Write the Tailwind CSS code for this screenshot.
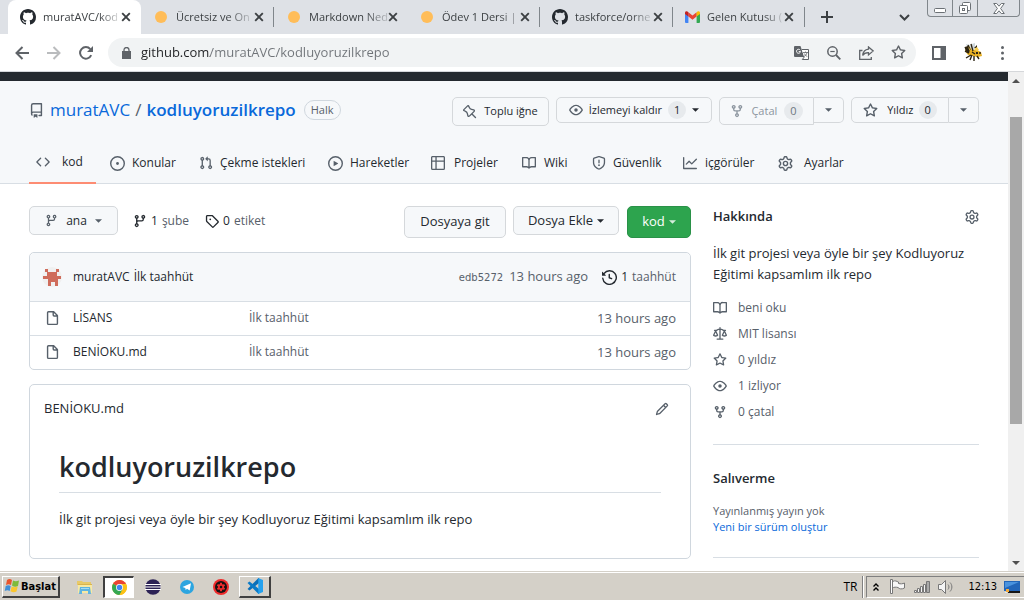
<!DOCTYPE html>
<html lang="tr">
<head>
<meta charset="utf-8">
<meta name="viewport" content="width=device-width, initial-scale=1">
<title>muratAVC/kodluyoruzilkrepo</title>
<script src="https://cdn.jsdelivr.net/npm/@tailwindcss/browser@4"></script>
</head>
<body class="flex h-screen flex-col overflow-hidden bg-white font-['Open_Sans','Noto_Sans',sans-serif] text-[13px] text-[#24292f]">

<svg class="hidden" aria-hidden="true">
  <symbol id="github" viewBox="0 0 16 16"><path d="M8 0C3.58 0 0 3.58 0 8c0 3.54 2.29 6.53 5.47 7.59.4.07.55-.17.55-.38 0-.19-.01-.82-.01-1.49-2.01.37-2.53-.49-2.69-.94-.09-.23-.48-.94-.82-1.13-.28-.15-.68-.52-.01-.53.63-.01 1.08.58 1.23.82.72 1.21 1.87.87 2.33.66.07-.52.28-.87.51-1.07-1.78-.2-3.64-.89-3.64-3.95 0-.87.31-1.59.82-2.15-.08-.2-.36-1.02.08-2.12 0 0 .67-.21 2.2.82.64-.18 1.32-.27 2-.27.68 0 1.36.09 2 .27 1.53-1.04 2.2-.82 2.2-.82.44 1.1.16 1.92.08 2.12.51.56.82 1.27.82 2.15 0 3.07-1.87 3.75-3.65 3.95.29.25.54.73.54 1.48 0 1.07-.01 1.93-.01 2.2 0 .21.15.46.55.38A8.013 8.013 0 0016 8c0-4.42-3.58-8-8-8z"/></symbol>
  <symbol id="close" viewBox="0 0 10 10"><path d="M1.2 1.2l7.6 7.6M8.8 1.2L1.2 8.8" stroke="currentColor" stroke-width="1.9" fill="none"/></symbol>
  <symbol id="repo" viewBox="0 0 16 16"><path fill-rule="evenodd" d="M2 2.5A2.5 2.5 0 014.5 0h8.75a.75.75 0 01.75.75v12.5a.75.75 0 01-.75.75h-2.5a.75.75 0 110-1.5h1.75v-2h-8a1 1 0 00-.714 1.7.75.75 0 01-1.072 1.05A2.495 2.495 0 012 11.5v-9zm10.5-1V9h-8c-.356 0-.694.074-1 .208V2.5a1 1 0 011-1h8zM5 12.25v3.25a.25.25 0 00.4.2l1.45-1.087a.25.25 0 01.3 0L8.6 15.7a.25.25 0 00.4-.2v-3.25a.25.25 0 00-.25-.25h-3.5a.25.25 0 00-.25.25z"/></symbol>
  <symbol id="pin" viewBox="0 0 16 16"><path fill-rule="evenodd" d="M4.456.734a1.75 1.75 0 012.826.504l.613 1.327a3.081 3.081 0 002.084 1.707l2.454.584c1.332.317 1.8 1.972.832 2.94L11.06 10l3.72 3.72a.75.75 0 11-1.061 1.06L10 11.06l-2.204 2.205c-.968.968-2.623.5-2.94-.832l-.584-2.454a3.081 3.081 0 00-1.707-2.084l-1.327-.613a1.75 1.75 0 01-.504-2.826L4.456.734zM5.92 1.866a.25.25 0 00-.404-.072L1.794 5.516a.25.25 0 00.072.404l1.328.613A4.582 4.582 0 015.73 9.63l.584 2.454a.25.25 0 00.42.12l5.47-5.47a.25.25 0 00-.12-.42L9.63 5.73a4.581 4.581 0 01-3.098-2.537L5.92 1.866z"/></symbol>
  <symbol id="eye" viewBox="0 0 16 16"><path fill-rule="evenodd" d="M1.679 7.932c.412-.621 1.242-1.75 2.366-2.717C5.175 4.242 6.527 3.5 8 3.5c1.473 0 2.824.742 3.955 1.715 1.124.967 1.954 2.096 2.366 2.717a.119.119 0 010 .136c-.412.621-1.242 1.75-2.366 2.717C10.825 11.758 9.473 12.5 8 12.5c-1.473 0-2.824-.742-3.955-1.715C2.92 9.818 2.09 8.69 1.679 8.068a.119.119 0 010-.136zM8 2c-1.981 0-3.67.992-4.933 2.078C1.797 5.169.88 6.423.43 7.1a1.619 1.619 0 000 1.798c.45.678 1.367 1.932 2.637 3.024C4.329 13.008 6.019 14 8 14c1.981 0 3.67-.992 4.933-2.078 1.27-1.091 2.187-2.345 2.637-3.023a1.619 1.619 0 000-1.798c-.45-.678-1.367-1.932-2.637-3.023C11.671 2.992 9.981 2 8 2zm0 8a2 2 0 100-4 2 2 0 000 4z"/></symbol>
  <symbol id="fork" viewBox="0 0 16 16"><path fill-rule="evenodd" d="M5 3.25a.75.75 0 11-1.5 0 .75.75 0 011.5 0zm0 2.122a2.25 2.25 0 10-1.5 0v.878A2.25 2.25 0 005.75 8.5h1.5v2.128a2.251 2.251 0 101.5 0V8.5h1.5a2.25 2.25 0 002.25-2.25v-.878a2.25 2.25 0 10-1.5 0v.878a.75.75 0 01-.75.75h-4.5A.75.75 0 015 6.25v-.878zm3.75 7.378a.75.75 0 11-1.5 0 .75.75 0 011.5 0zm3-8.75a.75.75 0 100-1.5.75.75 0 000 1.5z"/></symbol>
  <symbol id="star" viewBox="0 0 16 16"><path fill-rule="evenodd" d="M8 .25a.75.75 0 01.673.418l1.882 3.815 4.21.612a.75.75 0 01.416 1.279l-3.046 2.97.719 4.192a.75.75 0 01-1.088.791L8 12.347l-3.766 1.98a.75.75 0 01-1.088-.79l.72-4.194L.818 6.374a.75.75 0 01.416-1.28l4.21-.611L7.327.668A.75.75 0 018 .25zm0 2.445L6.615 5.5a.75.75 0 01-.564.41l-3.097.45 2.24 2.184a.75.75 0 01.216.664l-.528 3.084 2.769-1.456a.75.75 0 01.698 0l2.77 1.456-.53-3.084a.75.75 0 01.216-.664l2.24-2.183-3.096-.45a.75.75 0 01-.564-.41L8 2.694v.001z"/></symbol>
  <symbol id="code" viewBox="0 0 16 16"><path fill-rule="evenodd" d="M4.72 3.22a.75.75 0 011.06 1.06L2.06 8l3.72 3.72a.75.75 0 11-1.06 1.06L.47 8.53a.75.75 0 010-1.06l4.25-4.25zm6.56 0a.75.75 0 10-1.06 1.06L13.94 8l-3.72 3.72a.75.75 0 101.06 1.06l4.25-4.25a.75.75 0 000-1.06l-4.25-4.25z"/></symbol>
  <symbol id="issue" viewBox="0 0 16 16"><path d="M8 9.5a1.5 1.5 0 100-3 1.5 1.5 0 000 3z"/><path fill-rule="evenodd" d="M8 0a8 8 0 100 16A8 8 0 008 0zM1.5 8a6.5 6.5 0 1113 0 6.5 6.5 0 01-13 0z"/></symbol>
  <symbol id="pull" viewBox="0 0 16 16"><path fill-rule="evenodd" d="M7.177 3.073L9.573.677A.25.25 0 0110 .854v4.792a.25.25 0 01-.427.177L7.177 3.427a.25.25 0 010-.354zM3.75 2.5a.75.75 0 100 1.5.75.75 0 000-1.5zm-2.25.75a2.25 2.25 0 113 2.122v5.256a2.251 2.251 0 11-1.5 0V5.372A2.25 2.25 0 011.5 3.25zM11 2.5h-1V4h1a1 1 0 011 1v5.628a2.251 2.251 0 101.5 0V5A2.5 2.5 0 0011 2.5zm1 10.25a.75.75 0 111.5 0 .75.75 0 01-1.5 0zM3.75 12a.75.75 0 100 1.5.75.75 0 000-1.5z"/></symbol>
  <symbol id="play" viewBox="0 0 16 16"><path fill-rule="evenodd" d="M1.5 8a6.5 6.5 0 1113 0 6.5 6.5 0 01-13 0zM8 0a8 8 0 100 16A8 8 0 008 0zM6.379 5.227A.25.25 0 006 5.442v5.117a.25.25 0 00.379.214l4.264-2.559a.25.25 0 000-.428L6.379 5.227z"/></symbol>
  <symbol id="table" viewBox="0 0 16 16"><path fill-rule="evenodd" d="M0 1.75C0 .784.784 0 1.75 0h12.5C15.216 0 16 .784 16 1.75v12.5A1.75 1.75 0 0114.25 16H1.75A1.75 1.75 0 010 14.25V1.75zM1.5 6.5v7.75c0 .138.112.25.25.25H5v-8H1.5zM5 5H1.5V1.75a.25.25 0 01.25-.25H5V5zm1.5 1.5v8h7.75a.25.25 0 00.25-.25V6.5h-8zm8-1.5h-8V1.5h7.75a.25.25 0 01.25.25V5z"/></symbol>
  <symbol id="book" viewBox="0 0 16 16"><path fill-rule="evenodd" d="M0 1.75A.75.75 0 01.75 1h4.253c1.227 0 2.317.59 3 1.501A3.744 3.744 0 0111.006 1h4.245a.75.75 0 01.75.75v10.5a.75.75 0 01-.75.75h-4.507a2.25 2.25 0 00-1.591.659l-.622.621a.75.75 0 01-1.06 0l-.622-.621A2.25 2.25 0 005.258 13H.75a.75.75 0 01-.75-.75V1.75zm8.755 3a2.25 2.25 0 012.25-2.25H14.5v9h-3.757c-.71 0-1.4.201-1.992.572l.004-7.322zm-1.504 7.324l.004-5.073-.002-2.253A2.25 2.25 0 005.003 2.5H1.5v9h3.757a3.75 3.75 0 011.994.574z"/></symbol>
  <symbol id="shield" viewBox="0 0 16 16"><path fill-rule="evenodd" d="M7.467.133a1.75 1.75 0 011.066 0l5.25 1.68A1.75 1.75 0 0115 3.48V7c0 1.566-.32 3.182-1.303 4.682-.983 1.498-2.585 2.813-5.032 3.855a1.7 1.7 0 01-1.33 0c-2.447-1.042-4.049-2.357-5.032-3.855C1.32 10.182 1 8.566 1 7V3.48a1.75 1.75 0 011.217-1.667l5.25-1.68zm.61 1.429a.25.25 0 00-.153 0l-5.25 1.68a.25.25 0 00-.174.238V7c0 1.358.275 2.666 1.057 3.86.784 1.194 2.121 2.34 4.366 3.297a.2.2 0 00.154 0c2.245-.956 3.582-2.104 4.366-3.298C13.225 9.666 13.5 8.36 13.5 7V3.48a.25.25 0 00-.174-.237l-5.25-1.68zM9 10.5a1 1 0 11-2 0 1 1 0 012 0zm-.25-5.75a.75.75 0 10-1.5 0v3a.75.75 0 001.5 0v-3z"/></symbol>
  <symbol id="graph" viewBox="0 0 16 16"><path fill-rule="evenodd" d="M1.5 1.75a.75.75 0 00-1.5 0v12.5c0 .414.336.75.75.75h14.5a.75.75 0 000-1.5H1.5V1.75zm14.28 2.53a.75.75 0 00-1.06-1.06L10 7.94 7.53 5.47a.75.75 0 00-1.06 0L3.22 8.72a.75.75 0 001.06 1.06L7 7.06l2.47 2.47a.75.75 0 001.06 0l5.25-5.25z"/></symbol>
  <symbol id="gear" viewBox="0 0 16 16"><path fill-rule="evenodd" d="M8 0a8.2 8.2 0 01.701.031C9.444.095 9.99.645 10.16 1.29l.288 1.107c.018.066.079.158.212.224.231.114.454.243.668.386.123.082.233.09.299.071l1.103-.303c.644-.176 1.392.021 1.82.63.27.385.506.792.704 1.218.315.675.111 1.422-.364 1.891l-.814.806c-.049.048-.098.147-.088.294.016.257.016.515 0 .772-.01.147.038.246.088.294l.814.806c.475.469.679 1.216.364 1.891a7.977 7.977 0 01-.704 1.217c-.428.61-1.176.807-1.82.63l-1.102-.302c-.067-.019-.177-.011-.3.071a5.909 5.909 0 01-.668.386c-.133.066-.194.158-.211.224l-.29 1.106c-.168.646-.715 1.196-1.458 1.26a8.006 8.006 0 01-1.402 0c-.743-.064-1.289-.614-1.458-1.26l-.289-1.106c-.018-.066-.079-.158-.212-.224a5.738 5.738 0 01-.668-.386c-.123-.082-.233-.09-.299-.071l-1.103.303c-.644.176-1.392-.021-1.82-.63a8.12 8.12 0 01-.704-1.218c-.315-.675-.111-1.422.363-1.891l.815-.806c.05-.048.098-.147.088-.294a6.214 6.214 0 010-.772c.01-.147-.038-.246-.088-.294l-.815-.806C.635 6.045.431 5.298.746 4.623a7.92 7.92 0 01.704-1.217c.428-.61 1.176-.807 1.82-.63l1.102.302c.067.019.177.011.3-.071.214-.143.437-.272.668-.386.133-.066.194-.158.211-.224l.29-1.106C6.009.645 6.556.095 7.299.03 7.53.01 7.764 0 8 0zm-.571 1.525c-.036.003-.108.036-.137.146l-.289 1.105c-.147.561-.549.967-.998 1.189-.173.086-.34.183-.5.29-.417.278-.97.423-1.529.27l-1.103-.303c-.109-.03-.175.016-.195.045-.22.312-.412.644-.573.99-.014.031-.021.11.059.19l.815.806c.411.406.562.957.53 1.456a4.709 4.709 0 000 .582c.032.499-.119 1.05-.53 1.456l-.815.806c-.081.08-.073.159-.059.19.162.346.353.677.573.989.02.03.085.076.195.046l1.102-.303c.56-.153 1.113-.008 1.53.27.161.107.328.204.501.29.447.222.85.629.997 1.189l.289 1.105c.029.109.101.143.137.146a6.6 6.6 0 001.142 0c.036-.003.108-.036.137-.146l.289-1.105c.147-.561.549-.967.998-1.189.173-.086.34-.183.5-.29.417-.278.97-.423 1.529-.27l1.103.303c.109.029.175-.016.195-.045.22-.313.411-.644.573-.99.014-.031.021-.11-.059-.19l-.815-.806c-.411-.406-.562-.957-.53-1.456a4.709 4.709 0 000-.582c-.032-.499.119-1.05.53-1.456l.815-.806c.081-.08.073-.159.059-.19a6.464 6.464 0 00-.573-.989c-.02-.03-.085-.076-.195-.046l-1.102.303c-.56.153-1.113.008-1.53-.27a4.44 4.44 0 00-.501-.29c-.447-.222-.85-.629-.997-1.189l-.289-1.105c-.029-.11-.101-.143-.137-.146a6.6 6.6 0 00-1.142 0zM11 8a3 3 0 11-6 0 3 3 0 016 0zM9.5 8a1.5 1.5 0 11-3.001.001A1.5 1.5 0 019.5 8z"/></symbol>
  <symbol id="branch" viewBox="0 0 16 16"><path fill-rule="evenodd" d="M11.75 2.5a.75.75 0 100 1.5.75.75 0 000-1.5zm-2.25.75a2.25 2.25 0 113 2.122V6A2.5 2.5 0 0110 8.5H6a1 1 0 00-1 1v1.128a2.251 2.251 0 11-1.5 0V5.372a2.25 2.25 0 111.5 0v1.836A2.492 2.492 0 016 7h4a1 1 0 001-1v-.628A2.25 2.25 0 019.5 3.25zM4.25 12a.75.75 0 100 1.5.75.75 0 000-1.5zM3.5 3.25a.75.75 0 111.5 0 .75.75 0 01-1.5 0z"/></symbol>
  <symbol id="tag" viewBox="0 0 16 16"><path fill-rule="evenodd" d="M2.5 7.775V2.75a.25.25 0 01.25-.25h5.025a.25.25 0 01.177.073l6.25 6.25a.25.25 0 010 .354l-5.025 5.025a.25.25 0 01-.354 0l-6.25-6.25a.25.25 0 01-.073-.177zm-1.5 0V2.75C1 1.784 1.784 1 2.75 1h5.025c.464 0 .91.184 1.238.513l6.25 6.25a1.75 1.75 0 010 2.474l-5.026 5.026a1.75 1.75 0 01-2.474 0l-6.25-6.25A1.75 1.75 0 011 7.775zM6 5a1 1 0 100 2 1 1 0 000-2z"/></symbol>
  <symbol id="history" viewBox="0 0 16 16"><path fill-rule="evenodd" d="M1.643 3.143L.427 1.927A.25.25 0 000 2.104V5.75c0 .138.112.25.25.25h3.646a.25.25 0 00.177-.427L2.715 4.215a6.5 6.5 0 11-1.18 4.458.75.75 0 10-1.493.154 8.001 8.001 0 101.6-5.684zM7.75 4a.75.75 0 01.75.75v2.992l2.028.812a.75.75 0 01-.557 1.392l-2.5-1A.75.75 0 017 8.25v-3.5A.75.75 0 017.75 4z"/></symbol>
  <symbol id="file" viewBox="0 0 16 16"><path fill-rule="evenodd" d="M3.75 1.5a.25.25 0 00-.25.25v11.5c0 .138.112.25.25.25h8.5a.25.25 0 00.25-.25V6H9.75A1.75 1.75 0 018 4.25V1.5H3.75zm5.75.56v2.19c0 .138.112.25.25.25h2.19L9.5 2.06zM2 1.75C2 .784 2.784 0 3.75 0h5.086c.464 0 .909.184 1.237.513l3.414 3.414c.329.328.513.773.513 1.237v8.086A1.75 1.75 0 0112.25 15h-8.5A1.75 1.75 0 012 13.25V1.75z"/></symbol>
  <symbol id="pencil" viewBox="0 0 16 16"><path fill-rule="evenodd" d="M11.013 1.427a1.75 1.75 0 012.474 0l1.086 1.086a1.75 1.75 0 010 2.474l-8.61 8.61c-.21.21-.47.364-.756.445l-3.251.93a.75.75 0 01-.927-.928l.929-3.25a1.75 1.75 0 01.445-.758l8.61-8.61zm1.414 1.06a.25.25 0 00-.354 0L10.811 3.75l1.439 1.44 1.263-1.263a.25.25 0 000-.354l-1.086-1.086zM11.189 6.25L9.75 4.81l-6.286 6.287a.25.25 0 00-.064.108l-.558 1.953 1.953-.558a.249.249 0 00.108-.064l6.286-6.286z"/></symbol>
  <symbol id="law" viewBox="0 0 16 16"><path fill-rule="evenodd" d="M8.75.75a.75.75 0 00-1.5 0V2h-.984c-.305 0-.604.08-.869.23l-1.288.737A.25.25 0 013.984 3H1.75a.75.75 0 000 1.5h.428L.066 9.192a.75.75 0 00.154.838l.53-.53-.53.53v.001l.002.002.002.002.006.006.016.015.045.04a3.514 3.514 0 00.686.45A4.492 4.492 0 003 11c.88 0 1.556-.22 2.023-.454a3.515 3.515 0 00.686-.45l.045-.04.016-.015.006-.006.002-.002.001-.002L5.25 9.5l.53.53a.75.75 0 00.154-.838L3.822 4.5h.162c.305 0 .604-.08.869-.23l1.289-.737a.25.25 0 01.124-.033h.984V13h-2.5a.75.75 0 000 1.5h6.5a.75.75 0 000-1.5h-2.5V3.5h.984a.25.25 0 01.124.033l1.29.736c.264.152.563.231.868.231h.162l-2.112 4.692a.75.75 0 00.154.838l.53-.53-.53.53v.001l.002.002.002.002.006.006.016.015.045.04a3.517 3.517 0 00.686.45A4.492 4.492 0 0013 11c.88 0 1.556-.22 2.023-.454a3.512 3.512 0 00.686-.45l.045-.04.01-.01.006-.005.006-.006.002-.002.001-.002-.529-.531.53.53a.75.75 0 00.154-.838L13.823 4.5h.427a.75.75 0 000-1.5h-2.234a.25.25 0 01-.124-.033l-1.29-.736A1.75 1.75 0 009.735 2H8.75V.75zM1.695 9.227c.285.135.718.273 1.305.273s1.02-.138 1.305-.273L3 6.327l-1.305 2.9zm10 0c.285.135.718.273 1.305.273s1.02-.138 1.305-.273L13 6.327l-1.305 2.9z"/></symbol>
  <symbol id="caret" viewBox="0 0 8 4"><path d="M0 0h8L4 4z"/></symbol>
</svg>

<!-- Browser tabs -->
<header class="flex h-[34px] shrink-0 items-stretch bg-[#dee1e6] pl-2 text-[11px] text-[#3c4043]">
  <div class="flex w-[133px] items-center rounded-t-lg bg-white pl-3 pr-[10px]">
    <svg class="mr-[7px] size-4 shrink-0 fill-[#24292f]"><use href="#github"/></svg>
    <span class="whitespace-nowrap [mask-image:linear-gradient(to_right,#000_75%,#0003)]">muratAVC/kod</span>
    <button aria-label="Sekmeyi kapat" class="ml-auto shrink-0"><svg class="size-[10px]"><use href="#close"/></svg></button>
  </div>
  <div class="flex w-[133px] items-center pl-3">
    <i class="ml-[2px] mr-[9px] size-3 shrink-0 rounded-full bg-[#ffbd59]"></i>
    <span class="whitespace-nowrap [mask-image:linear-gradient(to_right,#000_70%,#0003)]">Ücretsiz ve On</span>
    <button aria-label="Sekmeyi kapat" class="ml-auto mr-[9px] shrink-0"><svg class="size-[10px]"><use href="#close"/></svg></button>
    <i class="h-5 w-px bg-[#80868b]"></i>
  </div>
  <div class="flex w-[133px] items-center pl-3">
    <i class="ml-[2px] mr-[9px] size-3 shrink-0 rounded-full bg-[#ffbd59]"></i>
    <span class="whitespace-nowrap [mask-image:linear-gradient(to_right,#000_70%,#0003)]">Markdown Ned</span>
    <button aria-label="Sekmeyi kapat" class="ml-auto mr-[9px] shrink-0"><svg class="size-[10px]"><use href="#close"/></svg></button>
    <i class="h-5 w-px bg-[#80868b]"></i>
  </div>
  <div class="flex w-[133px] items-center pl-3">
    <i class="ml-[2px] mr-[9px] size-3 shrink-0 rounded-full bg-[#ffbd59]"></i>
    <span class="whitespace-nowrap [mask-image:linear-gradient(to_right,#000_75%,#0006)]">Ödev 1 Dersi |</span>
    <button aria-label="Sekmeyi kapat" class="ml-auto mr-[9px] shrink-0"><svg class="size-[10px]"><use href="#close"/></svg></button>
    <i class="h-5 w-px bg-[#80868b]"></i>
  </div>
  <div class="flex w-[133px] items-center pl-3">
    <svg class="mr-[7px] size-4 shrink-0 fill-[#24292f]"><use href="#github"/></svg>
    <span class="whitespace-nowrap [mask-image:linear-gradient(to_right,#000_75%,#0003)]">taskforce/orne</span>
    <button aria-label="Sekmeyi kapat" class="ml-auto mr-[9px] shrink-0"><svg class="size-[10px]"><use href="#close"/></svg></button>
    <i class="h-5 w-px bg-[#80868b]"></i>
  </div>
  <div class="flex w-[132px] items-center pl-3">
    <svg class="mr-[7px] h-3 w-[15px] shrink-0" viewBox="0 0 15 12"><path fill="#4285f4" d="M0 2h3.4v10H1a1 1 0 01-1-1z"/><path fill="#34a853" d="M11.6 2H15v9a1 1 0 01-1 1h-2.4z"/><path fill="#ea4335" d="M3.4 1.2L7.5 4.4l4.1-3.2v4.4L7.5 8.8 3.4 5.6z"/><path fill="#c5221f" d="M0 1.8C0 .2 1.8-.4 3.4 1.2v4.4L0 3z"/><path fill="#fbbc04" d="M15 1.8c0-1.6-1.8-2.2-3.4-.6v4.4L15 3z"/></svg>
    <span class="whitespace-nowrap [mask-image:linear-gradient(to_right,#000_75%,#0003)]">Gelen Kutusu (</span>
    <button aria-label="Sekmeyi kapat" class="ml-auto mr-[10px] shrink-0"><svg class="size-[10px]"><use href="#close"/></svg></button>
    <i class="h-5 w-px bg-[#80868b]"></i>
  </div>
  <button aria-label="Yeni sekme" class="ml-4 shrink-0"><svg class="size-3" viewBox="0 0 12 12"><path d="M6 0v12M0 6h12" stroke="#3c4043" stroke-width="2"/></svg></button>
  <button aria-label="Sekmelerde ara" class="ml-auto mr-[17px] shrink-0"><svg class="h-[7px] w-[11px]" viewBox="0 0 11 7"><path d="M1 1l4.5 4.5L10 1" stroke="#3c4043" stroke-width="2" fill="none"/></svg></button>
  <div class="mr-1 flex h-[17px] w-[93px] shrink-0 divide-x divide-[#80868b] rounded-b border border-t-0 border-[#80868b]">
    <button aria-label="Simge durumuna küçült" class="flex w-[25px] items-center justify-center"><svg class="mt-1 h-[5px] w-3" viewBox="0 0 12 5"><rect x=".5" y=".5" width="11" height="4" rx="1" fill="#fff" stroke="#6b7075"/></svg></button>
    <button aria-label="Önceki boyut" class="flex w-[25px] items-center justify-center"><svg class="size-3" viewBox="0 0 12 12" fill="#fff" stroke="#6b7075"><rect x="3.5" y=".5" width="8" height="8" rx="1"/><rect x=".5" y="3.5" width="8" height="8" rx="1"/><rect x="3.5" y="6.5" width="2" height="2"/></svg></button>
    <button aria-label="Kapat" class="flex flex-1 items-center justify-center"><svg class="h-[11px] w-3" viewBox="0 0 12 11"><path d="M.7.5h3L6 3.2 8.3.5h3L7.6 5.5l3.7 5h-3L6 7.8l-2.3 2.7h-3l3.7-5z" fill="#fff" stroke="#6b7075"/></svg></button>
  </div>
</header>

<!-- Browser toolbar -->
<div class="flex h-[38px] shrink-0 items-center border-b border-[#d5d7da] bg-white pl-[15px] pr-5 text-[#5f6368]">
  <button aria-label="Geri"><svg class="h-[14px] w-[14px]" viewBox="0 0 14 14"><path d="M14 7H1.5M7.5 1L1.5 7l6 6" stroke="#5f6368" stroke-width="2" fill="none"/></svg></button>
  <button aria-label="İleri" class="ml-[18px]"><svg class="h-[14px] w-[14px]" viewBox="0 0 14 14"><path d="M0 7h12.500M6.500 1l6 6-6 6" stroke="#babcbe" stroke-width="2" fill="none"/></svg></button>
  <button aria-label="Yenile" class="ml-[18px]"><svg class="size-[14px]" viewBox="0 0 14 14"><path d="M12.200 9.200A5.800 5.800 0 1 1 11.300 3.100" stroke="#5f6368" stroke-width="2" fill="none"/><path fill="#5f6368" d="M14 0v6H8z"/></svg></button>
  <div class="ml-[15px] flex h-[29px] flex-1 items-center rounded-full bg-[#f1f3f4] pl-[14px] pr-[10px]">
    <svg class="h-3 w-[9px] shrink-0" viewBox="0 0 9 12"><path fill="#5f6368" d="M0 4h9v8H0z"/><path d="M2 5V3a2.500 2.500 0 0 1 5 0v2" stroke="#5f6368" stroke-width="1.300" fill="none"/></svg>
    <input aria-label="Adres çubuğu" value="github.com/muratAVC/kodluyoruzilkrepo" class="ml-[10px] min-w-0 flex-1 bg-[linear-gradient(to_right,#202124_69px,#6f7378_69px)] bg-clip-text text-[13px] text-transparent outline-none">
    <button aria-label="Çevir"><svg class="h-[14px] w-[15px]" viewBox="0 0 15 14"><path fill="#5f6368" d="M1 0h5.500l3.700 11H1a1 1 0 0 1-1-1V1a1 1 0 0 1 1-1z"/><path d="M7.800 3.500h6.700v10H8.300l2-2.500" stroke="#5f6368" fill="#fff"/><path d="M6.200 4.200a2 2 0 1 0 .3 1.400H4.700" stroke="#fff" fill="none"/><path d="M9 6.500h5M11.500 5.500v1M13 6.500c-.4 2-1.600 3.300-3 4M10.300 7.500c.7 1.500 1.700 2.300 3 3" stroke="#5f6368" stroke-width=".8" fill="none"/></svg></button>
    <button aria-label="Yakınlaştırma" class="ml-[18px]"><svg class="size-[14px]" viewBox="0 0 14 14" stroke="#5f6368" fill="none"><circle cx="5.500" cy="5.500" r="4.700" stroke-width="1.500"/><path d="M3.300 5.500h4.400" stroke-width="1.200"/><path d="M9 9l4.300 4.300" stroke-width="1.800"/></svg></button>
    <button aria-label="Paylaş" class="ml-[18px]"><svg class="h-[14px] w-[15px]" viewBox="0 0 15 14" stroke="#5f6368" stroke-width="1.300" fill="none"><path d="M3.500 4.500H.7v8.800h11.600V11"/><path d="M9.500.9l4.700 4-4.700 4V6.600C7 6.500 5 7.200 3.700 9.500 4 6 6 3.600 9.500 3.200z"/></svg></button>
    <button aria-label="Yer işareti" class="ml-[17px]"><svg class="size-[15px] fill-[#5f6368]"><use href="#star"/></svg></button>
  </div>
  <button aria-label="Yan panel" class="ml-4"><svg class="size-[14px]" viewBox="0 0 14 14"><rect x="1" y="1" width="12" height="12" fill="#fff" stroke="#5f6368" stroke-width="2"/><path fill="#5f6368" d="M8.500 1H13v12H8.500z"/></svg></button>
  <button aria-label="Profil" class="ml-[17px]"><svg class="size-5" viewBox="0 0 20 20"><path fill="#cfd8dd" d="M3 1l4 1 2 4-4 0zM9 1l3-1 0 6-2 1z"/><path fill="#e8b024" d="M3 4l3-1 3 4 5 0 4 2 1 4-4 1-5-1-5-1-3-4z"/><path d="M2 4l2 4M5 2l2 5M8 1l2 7M2 8l4 2M8 12l-5 3M9 12l-2 5M11 13l0 5M14 13l2 3M9 9l3 2" stroke="#2c2413" stroke-width="1.400"/><path fill="#2c2413" d="M2 4l3-1 2 4-1 3-3-2zM13 9l2 0 0 2-2 0zM11 5l3-3 0 3z"/><path fill="#f6cf52" d="M11 6l3-2 2 3-3 1zM5 4l2 2v2z"/><circle cx="17" cy="10" r="1" fill="#2c2413"/></svg></button>
  <button aria-label="Menü" class="ml-[18px]"><svg class="h-[14px] w-[3px]" viewBox="0 0 3 14" fill="#5f6368"><circle cx="1.500" cy="1.500" r="1.500"/><circle cx="1.500" cy="7" r="1.500"/><circle cx="1.500" cy="12.500" r="1.500"/></svg></button>
</div>

<div class="flex min-h-0 flex-1">
<!-- Page -->
<main class="min-w-0 flex-1 overflow-hidden">
  <div class="h-[9px] bg-[#24292f]"></div>
  <div class="border-b border-[#d8dee4] bg-[#f6f8fa] px-[29px]">
    <div class="flex items-start justify-between pt-4">
      <div class="flex h-[26px] items-center text-[17px] text-[#0969da]">
        <svg class="mr-[6px] size-[15px] fill-[#57606a]"><use href="#repo"/></svg>
        <a href="#">muratAVC</a><span class="mx-[5px] text-[#57606a]">/</span><a href="#" class="font-semibold">kodluyoruzilkrepo</a>
        <span class="ml-2 rounded-full border border-[#d0d7de] px-[6px] text-[11px] leading-[18px] text-[#57606a]">Halk</span>
      </div>
      <div class="flex items-start gap-[7px] text-[11px]">
        <button class="flex h-[29px] w-[97px] items-center justify-center gap-[7px] rounded-[5px] border border-[#d5d8db] bg-[#f6f8fa]"><svg class="size-[14px] fill-[#57606a]"><use href="#pin"/></svg>Toplu iğne</button>
        <button class="flex h-[26px] w-[156px] items-center justify-center gap-[6px] rounded-[5px] border border-[#d5d8db] bg-[#f6f8fa]"><svg class="size-[14px] fill-[#57606a]"><use href="#eye"/></svg>İzlemeyi kaldır<span class="rounded-full bg-[#e7eaed] px-[6px] leading-[18px]">1</span><svg class="h-1 w-[7px] fill-[#24292f]"><use href="#caret"/></svg></button>
        <div class="flex items-start">
          <button disabled class="flex h-[28px] w-[95px] items-center justify-center gap-[7px] rounded-l-[5px] border border-[#d5d8db] bg-[#f6f8fa] text-[#8c959f]"><svg class="size-[14px] fill-[#8c959f]"><use href="#fork"/></svg>Çatal<span class="rounded-full bg-[#e7eaed] px-[6px] leading-[18px] text-[#6e7781]">0</span></button>
          <button aria-label="Çatallar" class="flex h-[26px] w-[30px] items-center justify-center rounded-r-[5px] border border-l-0 border-[#d5d8db] bg-[#f6f8fa]"><svg class="h-1 w-[7px] fill-[#57606a]"><use href="#caret"/></svg></button>
        </div>
        <div class="flex items-start">
          <button class="flex h-[26px] w-[98px] items-center justify-center gap-[9px] rounded-l-[5px] border border-[#d5d8db] bg-[#f6f8fa]"><svg class="size-[15px] fill-[#57606a]"><use href="#star"/></svg>Yıldız<span class="-ml-1 rounded-full bg-[#e7eaed] px-[6px] leading-[18px]">0</span></button>
          <button aria-label="Listeler" class="flex h-[26px] w-[30px] items-center justify-center rounded-r-[5px] border border-l-0 border-[#d5d8db] bg-[#f6f8fa]"><svg class="h-1 w-[7px] fill-[#57606a]"><use href="#caret"/></svg></button>
        </div>
      </div>
    </div>
    <nav class="-mb-px mt-4 grid grid-cols-[81px_89px_129px_103px_91px_70px_91px_95px_1fr] whitespace-nowrap text-[12px] leading-[40px]">
      <a href="#" class="flex w-[67px] items-center gap-3 border-b-2 border-[#fd8c73] pl-[7px]"><svg class="size-[14px] fill-[#57606a]"><use href="#code"/></svg>kod</a>
      <a href="#" class="flex items-center gap-[7px]"><svg class="size-[15px] fill-[#57606a]"><use href="#issue"/></svg>Konular</a>
      <a href="#" class="flex items-center gap-[7px]"><svg class="size-[14px] fill-[#57606a]"><use href="#pull"/></svg>Çekme istekleri</a>
      <a href="#" class="flex items-center gap-[7px]"><svg class="size-[15px] fill-[#57606a]"><use href="#play"/></svg>Hareketler</a>
      <a href="#" class="flex items-center gap-[9px]"><svg class="size-[14px] fill-[#57606a]"><use href="#table"/></svg>Projeler</a>
      <a href="#" class="flex items-center gap-2"><svg class="size-[14px] fill-[#57606a]"><use href="#book"/></svg>Wiki</a>
      <a href="#" class="flex items-center gap-[7px]"><svg class="size-[14px] fill-[#57606a]"><use href="#shield"/></svg>Güvenlik</a>
      <a href="#" class="flex items-center gap-2"><svg class="size-[14px] fill-[#57606a]"><use href="#graph"/></svg>içgörüler</a>
      <a href="#" class="flex items-center gap-[11px]"><svg class="size-[15px] fill-[#57606a]"><use href="#gear"/></svg>Ayarlar</a>
    </nav>
  </div>

  <div class="flex gap-[22px] px-[29px] pt-[22px]">
    <div class="min-w-0 flex-1">
      <div class="flex h-8 items-start text-[12px]">
        <button class="flex h-[29px] w-[89px] items-center justify-center gap-2 rounded-[5px] border border-[#d5d8db] bg-[#f6f8fa]"><svg class="size-[13px] fill-[#57606a]"><use href="#branch"/></svg>ana<svg class="h-1 w-[7px] fill-[#57606a]"><use href="#caret"/></svg></button>
        <a href="#" class="ml-[15px] flex h-[30px] items-center gap-1 text-[#57606a]"><svg class="size-[14px] fill-[#24292f]"><use href="#branch"/></svg><b class="font-medium text-[#24292f]">1</b>şube</a>
        <a href="#" class="ml-4 flex h-[30px] items-center gap-1 text-[#57606a]"><svg class="size-[14px] fill-[#24292f]"><use href="#tag"/></svg><b class="font-medium text-[#24292f]">0</b>etiket</a>
        <button class="ml-auto h-8 w-[102px] rounded-[5px] border border-[#d5d8db] bg-[#f6f8fa] text-[13px]">Dosyaya git</button>
        <button class="ml-[7px] flex h-[29px] w-[106px] items-center justify-center gap-1 rounded-[5px] border border-[#d5d8db] bg-[#f6f8fa] text-[13px]">Dosya Ekle<svg class="h-1 w-[7px] fill-[#24292f]"><use href="#caret"/></svg></button>
        <button class="ml-2 flex h-8 w-16 items-center justify-center gap-1 rounded-[5px] border border-[#2a9148] bg-[#2da44e] text-[13px] text-white">kod<svg class="h-1 w-[7px] fill-white/80"><use href="#caret"/></svg></button>
      </div>

      <section class="mt-[14px] rounded-[5px] border border-[#d0d7de]">
        <div class="flex h-[49px] items-center rounded-t-[5px] border-b border-[#d8dee4] bg-[#f6f8fa] pl-3 pr-[14px] text-[12px]">
          <svg class="size-5" viewBox="0 0 20 20"><circle cx="10" cy="10" r="10" fill="#f0f0f0"/><path fill="#cf6c5b" d="M3 2h3v3h8V2h3v3h-2v4h4v3h-3v7h-3v-4h-4v4H6v-7H1V9h4V5H3z"/></svg>
          <a href="#" class="ml-[11px]">muratAVC</a><a href="#" class="ml-1">İlk taahhüt</a>
          <span class="ml-auto text-[10px] text-[#57606a] font-['DejaVu_Sans','Open_Sans',sans-serif]">edb5272</span>
          <span class="ml-[6px] text-[13px] text-[#57606a]">13 hours ago</span>
          <a href="#" class="ml-[14px] flex items-center gap-1 text-[#57606a]"><svg class="size-[15px] fill-[#24292f]"><use href="#history"/></svg><b class="font-medium text-[#24292f]">1</b>taahhüt</a>
        </div>
        <table class="w-full table-fixed text-[12px]">
          <tr class="h-[33px] border-b border-[#d8dee4]">
            <td class="w-[43px] pl-[15px]"><svg class="size-[15px] fill-[#57606a]"><use href="#file"/></svg></td>
            <td class="w-[176px]"><a href="#">LİSANS</a></td>
            <td class="text-[#57606a]">İlk taahhüt</td>
            <td class="w-[150px] pr-[14px] text-right text-[13px] text-[#57606a]">13 hours ago</td>
          </tr>
          <tr class="h-[34px]">
            <td class="pl-[15px]"><svg class="size-[15px] fill-[#57606a]"><use href="#file"/></svg></td>
            <td><a href="#">BENİOKU.md</a></td>
            <td class="text-[#57606a]">İlk taahhüt</td>
            <td class="pr-[14px] text-right text-[13px] text-[#57606a]">13 hours ago</td>
          </tr>
        </table>
      </section>

      <section class="mt-[14px] rounded-[5px] border border-[#d0d7de]">
        <div class="flex h-12 items-center justify-between pl-[14px] pr-[21px] text-[13px]">
          <a href="#">BENİOKU.md</a>
          <button aria-label="Düzenle"><svg class="size-[14px] fill-[#57606a]"><use href="#pencil"/></svg></button>
        </div>
        <div class="px-[29px] pb-7 pt-3">
          <h1 class="border-b border-[#d8dee4] pb-[4px] text-[27px] font-semibold leading-[43px]">kodluyoruzilkrepo</h1>
          <p class="mt-4 text-[13px] leading-[21px]">İlk git projesi veya öyle bir şey Kodluyoruz Eğitimi kapsamlım ilk repo</p>
        </div>
      </section>
    </div>

    <aside class="w-[266px] shrink-0">
      <div class="flex h-[22px] items-center justify-between">
        <h2 class="text-[13px] font-semibold">Hakkında</h2>
        <button aria-label="Depo ayrıntılarını düzenle"><svg class="size-[14px] fill-[#57606a]"><use href="#gear"/></svg></button>
      </div>
      <p class="mt-[15px] text-[13px] leading-[21px]">İlk git projesi veya öyle bir şey Kodluyoruz Eğitimi kapsamlım ilk repo</p>
      <ul class="mt-[10px] text-[12px] leading-[26px] text-[#57606a]">
        <li><a href="#" class="flex items-center gap-[11px]"><svg class="size-[14px] fill-[#57606a]"><use href="#book"/></svg>beni oku</a></li>
        <li><a href="#" class="flex items-center gap-[11px]"><svg class="size-[14px] fill-[#57606a]"><use href="#law"/></svg>MIT lisansı</a></li>
        <li><a href="#" class="flex items-center gap-[11px]"><svg class="size-[14px] fill-[#57606a]"><use href="#star"/></svg>0 yıldız</a></li>
        <li><a href="#" class="flex items-center gap-[11px]"><svg class="size-[14px] fill-[#57606a]"><use href="#eye"/></svg>1 izliyor</a></li>
        <li><a href="#" class="flex items-center gap-[11px]"><svg class="size-[14px] fill-[#57606a]"><use href="#fork"/></svg>0 çatal</a></li>
      </ul>
      <hr class="mt-[19px] border-[#d8dee4]">
      <h2 class="mt-[22px] text-[13px] font-semibold leading-[22px]">Salıverme</h2>
      <p class="mt-[14px] text-[11px] leading-4 text-[#57606a]">Yayınlanmış yayın yok</p>
      <a href="#" class="block text-[11px] leading-4 text-[#0969da]">Yeni bir sürüm oluştur</a>
      <hr class="mt-[22px] border-[#d8dee4]">
    </aside>
  </div>
</main>

<!-- Page scrollbar -->
<div class="flex w-4 shrink-0 flex-col items-center bg-[#f0f0f0] py-[7px]" aria-hidden="true">
  <svg class="h-[4px] w-2" viewBox="0 0 8 4"><path fill="#505050" d="M0 4h8L4 0z"/></svg>
  <div class="flex w-full flex-1 flex-col px-[2px] pb-[137px] pt-[34px]"><div class="flex-1 bg-[#a8a8a8]"></div></div>
  <svg class="h-[4px] w-2 fill-[#505050]"><use href="#caret"/></svg>
</div>
</div>

<!-- Taskbar -->
<footer class="flex h-[28px] shrink-0 items-center border-t border-white bg-[#d4d0c8] pl-[2px] text-black shadow-[0_-1px_0_#d4d0c8]">
  <button class="flex h-[22px] w-[58px] items-center gap-px border border-b-2 border-r-2 border-white border-b-[#404040] border-r-[#404040] pl-px text-[11px] font-bold font-['DejaVu_Sans_Condensed','DejaVu_Sans',sans-serif]"><svg class="size-4 shrink-0" viewBox="0 0 16 16"><path fill="#e8552d" d="M3 2c2-1.500 3.500-1 5 0L7 7C5.500 6 4 6 2 7z"/><path fill="#7fba3a" d="M9 2.500c2 1 3.500 1 6 0L14 8c-2 1-4 1-6-.500z"/><path fill="#3f8fd8" d="M1.700 8c2-1.200 3.500-1 5 0l-1 5c-1.500-1-3-1-5 0z"/><path fill="#fbc62d" d="M7.700 8.500c2 1 4 1 6 0l-1.200 5c-2 1-4 1-6-.300z"/></svg><span class="pt-[2px]">Başlat</span></button>
  <button aria-label="Dosya Gezgini" class="ml-[17px]"><svg class="size-4" viewBox="0 0 16 16"><path fill="#e8c968" d="M0 2h5l1 1h8v3H0z"/><path fill="#f8e9a3" d="M1 5h14v9H1z"/><path fill="#d9b44e" d="M1 5h14v1H1z"/><path fill="#5fb4e0" d="M3 8h10l1 7h-3v-3H5v3H2z"/><path fill="#a5dbf3" d="M4 9h8v1H4z"/></svg></button>
  <button aria-label="Chrome" class="ml-[10px] flex h-[22px] w-[31px] items-center justify-center border border-l-2 border-t-2 border-white border-l-[#404040] border-t-[#404040] bg-white"><svg class="size-[15px]" viewBox="0 0 16 16"><circle cx="8" cy="8" r="8" fill="#fbc116"/><path fill="#ea4335" d="M8 8L1.100 4A8 8 0 0 1 14.900 4z"/><path fill="#34a853" d="M8 8L1.100 4A8 8 0 0 0 8 16l3.500-6z"/><path fill="#fbc116" d="M8 4.300h7a8 8 0 0 1-7 11.700l3.300-6z"/><circle cx="8" cy="8" r="3.700" fill="#fff"/><circle cx="8" cy="8" r="2.900" fill="#4285f4"/></svg></button>
  <button aria-label="Eclipse" class="ml-[11px]"><svg class="size-4" viewBox="0 0 16 16"><circle cx="8" cy="8" r="7.700" fill="#2c2255"/><path stroke="#fff" d="M0 5.500h16M0 8h16M0 10.500h16"/></svg></button>
  <button aria-label="Telegram" class="ml-[19px]"><svg class="size-[14px]" viewBox="0 0 14 14"><circle cx="7" cy="7" r="7" fill="#2ca5e0"/><path fill="#fff" d="M2.500 7L11 3.300 9.700 10.500 7 8.700 5.700 10 5.300 8z"/></svg></button>
  <button aria-label="Kayıt" class="ml-[19px]"><svg class="size-4" viewBox="0 0 16 16"><circle cx="8" cy="8" r="8" fill="#ee2b2b"/><circle cx="8" cy="8" r="6" fill="#161212"/><path d="M8 3.800v8.400M4.400 5.900l7.200 4.200M11.600 5.900l-7.200 4.200" stroke="#ee2b2b" stroke-width="2"/><circle cx="8" cy="8" r="3" fill="#ee2b2b"/><circle cx="8" cy="8" r="1.300" fill="#161212"/></svg></button>
  <button aria-label="Visual Studio Code" class="ml-[10px] flex h-[22px] w-8 items-center justify-center border border-b-2 border-r-2 border-white border-b-[#404040] border-r-[#404040]"><svg class="size-4" viewBox="0 0 16 16"><path fill="#0a6fb8" d="M12 0v5L2.500 12.500.500 11l11-11z"/><path fill="#0a7bc8" d="M12 16v-5L2.500 3.500.500 5l11 11z"/><path fill="#25a1ee" d="M11.300 0L16 2v12l-4.700 2z"/></svg></button>
  <div class="ml-auto flex items-center text-[12px]">
    <span>TR</span>
    <i class="ml-[5px] h-[22px] w-[2px] border-l border-[#808080] bg-white"></i>
    <div class="ml-[2px] flex h-[22px] items-center border border-r-0 border-[#808080] border-b-white pl-[6px] pr-1">
      <svg class="h-2 w-[6px]" viewBox="0 0 6 8"><path d="M.500 3.500L3 1l2.500 2.500M.500 7.500L3 5l2.500 2.500" stroke="#000" stroke-width="1.400" fill="none"/></svg>
      <svg class="ml-[11px] h-[15px] w-4" viewBox="0 0 16 15"><path d="M2.500 2.500c3-1.500 4 0 6 .500v1.500c2 .500 4 .500 6-.500v5c-3 1.500-5 1-6.500-.500-2-.500-4-.500-5.500.500z" fill="#f7f7f7" stroke="#777"/><path d="M.500 0.500h2v14h-2z" fill="#fff" stroke="#777"/></svg>
      <svg class="ml-2 h-3 w-4" viewBox="0 0 16 12" fill="#f4f4f4" stroke="#777"><path d="M.500 9.500h2v2h-2zM3.500 7.500h2v4h-2zM6.500 5.500h2v6h-2zM9.500 3.500h2v8h-2z"/><path fill="#aaa" d="M12.500.500h3v11h-3z"/></svg>
      <svg class="ml-2 h-[14px] w-4" viewBox="0 0 16 14" stroke="#777"><path fill="#f4f4f4" d="M.500 4.500h3l4-4v13l-4-4h-3z"/><path fill="none" d="M10 4.500c1.300 1.500 1.300 3.500 0 5M12 2.500c2.500 2.500 2.500 6.500 0 9"/></svg>
      <time class="ml-[14px] pt-[2px] text-[11px] font-['DejaVu_Sans_Condensed','DejaVu_Sans',sans-serif]">12:13</time>
      <svg class="ml-[7px] h-[14px] w-4" viewBox="0 0 16 14"><path fill="#2265b8" d="M0 1h16v10H0z"/><path fill="#4a93de" d="M1 2h14L1 8z"/><path fill="#151515" d="M4 11h12v2H4z"/><path fill="#f2a93a" d="M2 9h3v3H2z"/><path fill="#dfe8f4" d="M1 12h2v1H1z"/></svg>
    </div>
  </div>
</footer>
</body>
</html>
